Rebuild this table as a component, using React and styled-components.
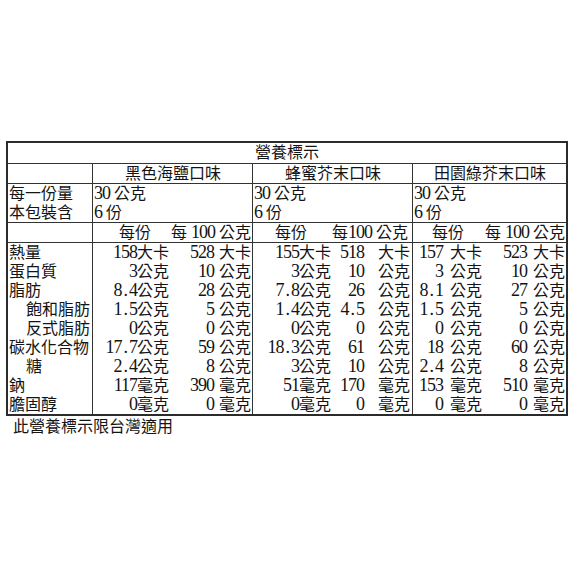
import React from 'react'
import styled, { createGlobalStyle } from 'styled-components'

const GlobalStyle = createGlobalStyle`
  body {
    margin: 0;
    background: #ffffff;
  }
`

const rows = [
  { label: '熱量', unit: '大卡' },
  { label: '蛋白質', unit: '公克' },
  { label: '脂肪', unit: '公克' },
  { label: '飽和脂肪', unit: '公克', indent: 17 },
  { label: '反式脂肪', unit: '公克', indent: 17 },
  { label: '碳水化合物', unit: '公克' },
  { label: '糖', unit: '公克', indent: 17 },
  { label: '鈉', unit: '毫克' },
  { label: '膽固醇', unit: '毫克' },
]

const flavors = [
  {
    name: '黑色海鹽口味',
    serve: ['158', '3', '8.4', '1.5', '0', '17.7', '2.4', '117', '0'],
    per100: ['528', '10', '28', '5', '0', '59', '8', '390', '0'],
    serveW: 76,
    serveGap: 0,
    perGap: 5,
    perPad: 1,
    head: { gap: 20, pad: 1, space: true },
  },
  {
    name: '蜂蜜芥末口味',
    serve: ['155', '3', '7.8', '1.4', '0', '18.3', '3', '51', '0'],
    per100: ['518', '10', '26', '4.5', '0', '61', '10', '170', '0'],
    serveW: 78,
    serveGap: 0,
    perSplit: 33,
    perPad: 2,
    head: { gap: 25, pad: 4, space: false },
  },
  {
    name: '田園綠芥末口味',
    serve: ['157', '3', '8.1', '1.5', '0', '18', '2.4', '153', '0'],
    per100: ['523', '10', '27', '5', '0', '60', '8', '510', '0'],
    serveW: 69,
    serveGap: 7,
    perGap: 6,
    perPad: 1,
    head: { gap: 21, pad: 1, space: true },
  },
]

// digits are set a little larger so they read like the tall half-width numerals of the label
const Number = ({ value }) => {
  const [whole, frac] = value.split('.')
  return (
    <Digits>
      {whole}
      {frac !== undefined && (
        <>
          <Dot>.</Dot>
          {frac}
        </>
      )}
    </Digits>
  )
}

const App = () => {
  return (
    <Page>
      <GlobalStyle />
      <Table>
        <TitleRow>營養標示</TitleRow>

        <Row $h={20}>
          <Cell />
          {flavors.map((f) => (
            <Cell key={f.name} $align='center'>
              {f.name}
            </Cell>
          ))}
        </Row>

        <Row $h={39}>
          <Cell>
            <Line>每一份量</Line>
            <Line>本包裝含</Line>
          </Cell>
          {flavors.map((f) => (
            <Cell key={f.name}>
              <Line>
                <Number value='30' /> 公克
              </Line>
              <Line>
                <Number value='6' /> 份
              </Line>
            </Cell>
          ))}
        </Row>

        <Row $h={20}>
          <Cell />
          {flavors.map((f) => (
            <HeadCell key={f.name} $gap={f.head.gap} $pad={f.head.pad}>
              <span>每份</span>
              <span>
                每{f.head.space ? ' ' : ''}
                <Number value='100' /> 公克
              </span>
            </HeadCell>
          ))}
        </Row>

        <Body>
          <Cell>
            {rows.map((r) => (
              <Label key={r.label} $indent={r.indent || 0}>
                {r.label}
              </Label>
            ))}
          </Cell>
          {flavors.map((f) => (
            <FlavorData key={f.name} $serveW={f.serveW}>
              {rows.map((r, i) => (
                <React.Fragment key={r.label}>
                  <Amount $gap={f.serveGap} $pad={0}>
                    <Number value={f.serve[i]} />
                    <span>{r.unit}</span>
                  </Amount>
                  <Amount
                    $gap={f.perGap || 0}
                    $pad={f.perPad}
                    $split={f.perSplit}
                  >
                    <Num $w={f.perSplit}>
                      <Number value={f.per100[i]} />
                    </Num>
                    <span>{r.unit}</span>
                  </Amount>
                </React.Fragment>
              ))}
            </FlavorData>
          ))}
        </Body>
      </Table>
      <Note>此營養標示限台灣適用</Note>
    </Page>
  )
}

export default App

const Page = styled.div`
  padding: 141px 0 0 6px;
  font-family: 'Liberation Serif', 'Noto Sans CJK TC', serif;
  font-size: 16px;
  color: #141414;
`

const Table = styled.div`
  width: 562px;
  box-sizing: border-box;
  border: 2px solid #2b2b2b;
`

const TitleRow = styled.div`
  height: 21px;
  box-sizing: border-box;
  border-bottom: 1px solid #333;
  line-height: 20px;
  text-align: center;
`

const Row = styled.div`
  display: grid;
  grid-template-columns: 85px 160px 160px 1fr;
  height: ${(p) => p.$h}px;
  box-sizing: border-box;
  border-bottom: 1px solid #333;
`

const Body = styled(Row).attrs({ $h: 171 })`
  border-bottom: none;
`

const Cell = styled.div`
  box-sizing: border-box;
  border-right: 1px solid #333;
  padding-left: 1px;
  line-height: 19px;
  text-align: ${(p) => p.$align || 'left'};
  white-space: nowrap;
  overflow: hidden;
  &:last-child {
    border-right: none;
  }
`

const Line = styled.div`
  height: 19px;
`

const HeadCell = styled(Cell)`
  display: flex;
  justify-content: flex-end;
  gap: ${(p) => p.$gap}px;
  padding-right: ${(p) => p.$pad}px;
`

const Label = styled.div`
  height: 19px;
  padding-left: ${(p) => p.$indent}px;
`

const FlavorData = styled.div`
  display: grid;
  grid-template-columns: ${(p) => p.$serveW}px 1fr;
  grid-auto-rows: 19px;
  box-sizing: border-box;
  border-right: 1px solid #333;
  line-height: 19px;
  white-space: nowrap;
  &:last-child {
    border-right: none;
  }
`

const Amount = styled.div`
  display: flex;
  justify-content: ${(p) => (p.$split ? 'space-between' : 'flex-end')};
  gap: ${(p) => p.$gap}px;
  padding-right: ${(p) => p.$pad}px;
`

const Num = styled.span`
  width: ${(p) => (p.$w ? `${p.$w}px` : 'auto')};
  text-align: right;
`

const Digits = styled.span`
  font-size: 18px;
  letter-spacing: -1px;
  line-height: 19px;
`

const Dot = styled.span`
  margin: 0 2px;
`

const Note = styled.div`
  padding-left: 7px;
  margin-top: 1px;
  line-height: 19px;
`
